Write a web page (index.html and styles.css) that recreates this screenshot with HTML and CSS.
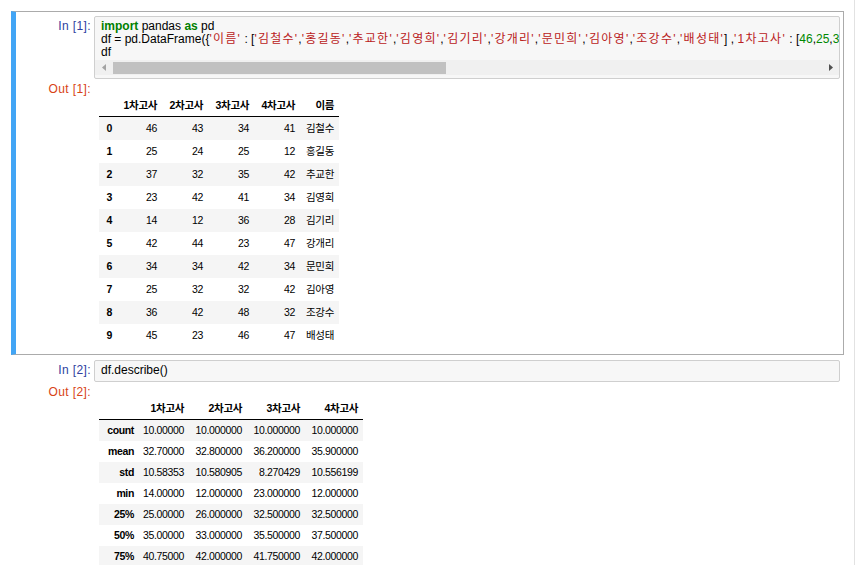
FILE: index.html
```html
<!DOCTYPE html>
<html lang="ko">
<head>
<meta charset="utf-8">
<title>Notebook</title>
<link rel="stylesheet" href="styles.css">
</head>
<body>
<div class="page">
  <div class="cell selected">
    <div class="row">
      <div class="prompt in">In [1]:</div>
      <div class="input-area scrolled">
        <div class="code"><span class="kw">import</span> pandas <span class="kw">as</span> pd
df = pd.DataFrame({<span class="str">'이름'</span> : [<span class="str">'김철수'</span>,<span class="str">'홍길동'</span>,<span class="str">'추교한'</span>,<span class="str">'김영희'</span>,<span class="str">'김기리'</span>,<span class="str">'강개리'</span>,<span class="str">'문민희'</span>,<span class="str">'김아영'</span>,<span class="str">'조강수'</span>,<span class="str">'배성태'</span>] ,<span class="str">'1차고사'</span> : [<span class="num">46</span>,<span class="num">25</span>,<span class="num">37</span>,<span class="num">23</span>,<span class="num">14</span>,<span class="num">42</span>,<span class="num">34</span>,<span class="num">25</span>,<span class="num">36</span>,<span class="num">45</span>] ,<span class="str">'2차고사'</span> : [<span class="num">43</span>,<span class="num">24</span>,<span class="num">32</span>,<span class="num">42</span>,<span class="num">12</span>,<span class="num">44</span>,<span class="num">34</span>,<span class="num">32</span>,<span class="num">42</span>,<span class="num">23</span>]})
df</div>
        <div class="hscroll">
          <svg class="arrow left" width="4" height="7" viewBox="0 0 4 7"><path d="M4 0V7L0 3.5Z" fill="#a3a3a3"/></svg>
          <div class="thumb"></div>
          <svg class="arrow right" width="4" height="7" viewBox="0 0 4 7"><path d="M0 0V7L4 3.5Z" fill="#505050"/></svg>
        </div>
      </div>
    </div>
    <div class="row">
      <div class="prompt out">Out [1]:</div>
      <div class="output-area">
        <table class="df df1">
          <thead>
            <tr><th class="w18"></th><th class="w45">1차고사</th><th class="w46">2차고사</th><th class="w46">3차고사</th><th class="w46">4차고사</th><th class="w39">이름</th></tr>
          </thead>
          <tbody>
            <tr><th>0</th><td>46</td><td>43</td><td>34</td><td>41</td><td>김철수</td></tr>
            <tr><th>1</th><td>25</td><td>24</td><td>25</td><td>12</td><td>홍길동</td></tr>
            <tr><th>2</th><td>37</td><td>32</td><td>35</td><td>42</td><td>추교한</td></tr>
            <tr><th>3</th><td>23</td><td>42</td><td>41</td><td>34</td><td>김영희</td></tr>
            <tr><th>4</th><td>14</td><td>12</td><td>36</td><td>28</td><td>김기리</td></tr>
            <tr><th>5</th><td>42</td><td>44</td><td>23</td><td>47</td><td>강개리</td></tr>
            <tr><th>6</th><td>34</td><td>34</td><td>42</td><td>34</td><td>문민희</td></tr>
            <tr><th>7</th><td>25</td><td>32</td><td>32</td><td>42</td><td>김아영</td></tr>
            <tr><th>8</th><td>36</td><td>42</td><td>48</td><td>32</td><td>조강수</td></tr>
            <tr><th>9</th><td>45</td><td>23</td><td>46</td><td>47</td><td>배성태</td></tr>
          </tbody>
        </table>
      </div>
    </div>
  </div>

  <div class="cell">
    <div class="row">
      <div class="prompt in">In [2]:</div>
      <div class="input-area">
        <div class="code">df.describe()</div>
      </div>
    </div>
    <div class="row">
      <div class="prompt out">Out [2]:</div>
      <div class="output-area">
        <table class="df df2">
          <thead>
            <tr><th class="w40"></th><th class="w50">1차고사</th><th class="w58">2차고사</th><th class="w58">3차고사</th><th class="w58">4차고사</th></tr>
          </thead>
          <tbody>
            <tr><th>count</th><td>10.00000</td><td>10.000000</td><td>10.000000</td><td>10.000000</td></tr>
            <tr><th>mean</th><td>32.70000</td><td>32.800000</td><td>36.200000</td><td>35.900000</td></tr>
            <tr><th>std</th><td>10.58353</td><td>10.580905</td><td>8.270429</td><td>10.556199</td></tr>
            <tr><th>min</th><td>14.00000</td><td>12.000000</td><td>23.000000</td><td>12.000000</td></tr>
            <tr><th>25%</th><td>25.00000</td><td>26.000000</td><td>32.500000</td><td>32.500000</td></tr>
            <tr><th>50%</th><td>35.00000</td><td>33.000000</td><td>35.500000</td><td>37.500000</td></tr>
            <tr><th>75%</th><td>40.75000</td><td>42.000000</td><td>41.750000</td><td>42.000000</td></tr>
          </tbody>
        </table>
      </div>
    </div>
  </div>
</div>
</body>
</html>
```

FILE: styles.css
```css
html, body {
  margin: 0;
  padding: 0;
  overflow: hidden;
  background: #fff;
}

body {
  font-family: "Liberation Sans", "Noto Sans CJK KR", sans-serif;
  color: #000;
}

.page {
  width: 855px;
  height: 565px;
  overflow: hidden;
  box-sizing: border-box;
  border-right: 1px solid #e2e2e2;
  padding-top: 11px;
}

.cell {
  margin-left: 11px;
  width: 833px;
  box-sizing: border-box;
  border: 1px solid transparent;
  border-left: 5px solid transparent;
  padding: 4px 3px 4px 0;
}

.cell.selected {
  border-color: #ababab;
  border-left-color: #42a5f5;
}

.row {
  display: flex;
  align-items: flex-start;
}

.prompt {
  flex: none;
  width: 78px;
  box-sizing: border-box;
  padding: 4px 3px 0 0;
  text-align: right;
  font-size: 12px;
  line-height: 13px;
  letter-spacing: 0.4px;
  white-space: nowrap;
}

.prompt.in { color: #303f9f; }
.prompt.out { color: #d84315; }

.input-area {
  flex: 1;
  min-width: 0;
  border: 1px solid #cfcfcf;
  border-radius: 2px;
  background: #f7f7f7;
  padding: 3px 0 4px;
}

.input-area.scrolled {
  padding-bottom: 3px;
}

.code {
  padding-left: 6px;
  white-space: pre;
  overflow: hidden;
  font-size: 12px;
  line-height: 13px;
  color: #000;
}

.kw { color: #008000; font-weight: bold; }
.str { color: #ba2121; letter-spacing: 1.25px; }
.num { color: #008800; }

.hscroll {
  margin-top: 1px;
  height: 15px;
  background: #f0f0f0;
  display: flex;
  align-items: center;
}

.arrow { flex: none; display: block; }
.arrow.left { margin-left: 7px; }
.arrow.right { margin-left: auto; margin-right: 6px; }

.thumb {
  flex: none;
  margin-left: 7px;
  width: 333px;
  height: 12px;
  background: #c1c1c1;
}

.output-area {
  padding: 15px 0 3px 5px;
}

.df {
  border-collapse: separate;
  border-spacing: 0;
  table-layout: fixed;
  font-size: 10.5px;
  letter-spacing: -0.35px;
  line-height: 13px;
}

.df1 { width: 240px; }
.df2 { width: 264px; }

.df th, .df td {
  box-sizing: border-box;
  padding: 0 5px 0 3px;
  text-align: right;
  vertical-align: middle;
  white-space: nowrap;
}

.df thead th {
  height: 23px;
  border-bottom: 1px solid #000;
  font-weight: bold;
}

.df tbody th { font-weight: bold; }

.df tbody tr:nth-child(odd) { background: #f5f5f5; }

.df1 tbody th, .df1 tbody td { height: 23px; }
.df2 tbody th, .df2 tbody td { height: 21px; }

.w18 { width: 18px; }
.w39 { width: 39px; }
.w40 { width: 40px; }
.w45 { width: 45px; }
.w46 { width: 46px; }
.w50 { width: 50px; }
.w58 { width: 58px; }
```
